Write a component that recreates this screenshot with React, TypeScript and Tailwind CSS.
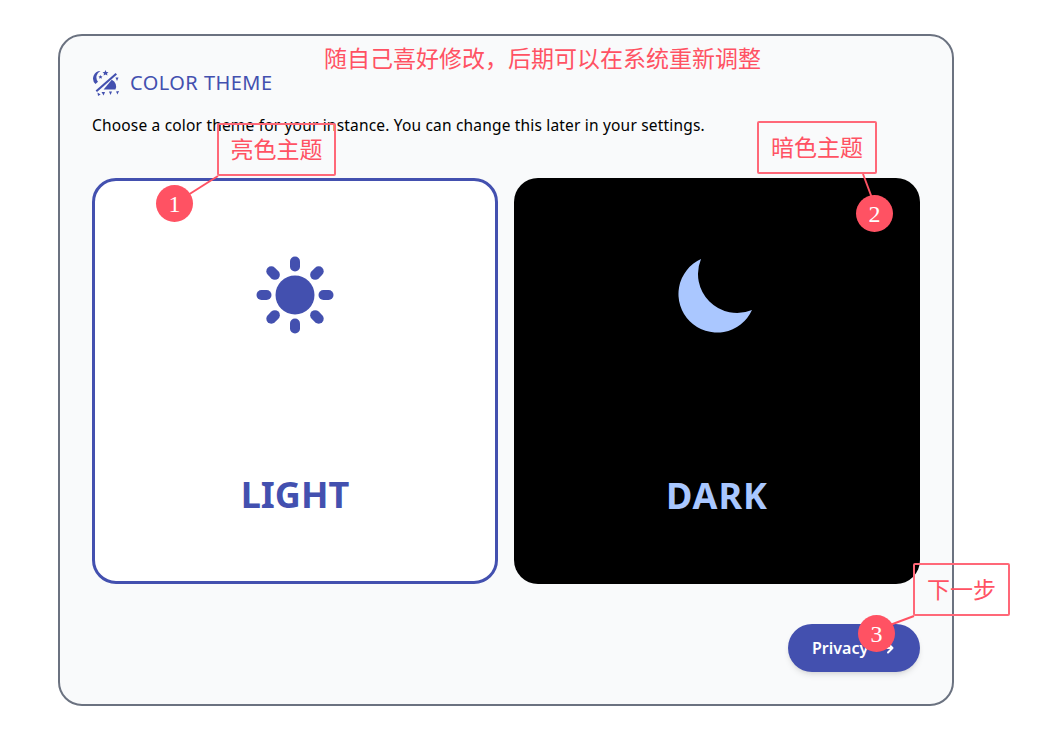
import React from "react";

const OVER = '"Noto Sans", "Lato", sans-serif';
const CJK = '"Noto Sans CJK SC", sans-serif';

function ThemeIcon() {
  return (
    <svg width="27" height="26" viewBox="0 0 27 26" fill="#4350af">
      <path d="M8.5 1 A7.5 7.5 0 0 0 3.5 14 L6 11.8 A7 7 0 0 1 8.5 1Z" />
      <path d="M13.5 0 L14.4 2 L16.5 2.2 L15 3.6 L15.4 5.6 L13.5 4.6 L11.6 5.6 L12 3.6 L10.5 2.2 L12.6 2Z" />
      <path d="M8.5 5 L9.1 6.3 L10.5 6.5 L9.5 7.4 L9.8 8.8 L8.5 8.1 L7.2 8.8 L7.5 7.4 L6.5 6.5 L7.9 6.3Z" />
      <path d="M3.6 20.4 L23.6 3 L25 4.6 L5 22Z" />
      <path d="M19.8 9.8 A7.2 7.2 0 0 1 23.4 19.6 L11.6 19.6Z" />
      <path d="M23.5 7.5 L26.5 7.5 L25 11Z" />
      <path d="M24 21.5 L27 21 L25.5 24.5 Z" />
      <path d="M17 21.5 L20 21.5 L18.5 25Z" />
      <path d="M9.5 22 L13 22 L11.6 25.5Z" />
      <path d="M5.5 22.6 L8.6 24.4 L6 26Z" />
    </svg>
  );
}

function Sun() {
  const rays = [0, 45, 90, 135, 180, 225, 270, 315];
  return (
    <svg width="78" height="78" viewBox="0 0 78 78" fill="#4350af">
      <circle cx="39" cy="39" r="19.5" />
      {rays.map((a) => (
        <rect key={a} x="34" y="0.5" width="10" height="15" rx="5" transform={`rotate(${a} 39 39)`} />
      ))}
    </svg>
  );
}

function Moon() {
  return (
    <svg width="80" height="80" viewBox="0 0 80 80" fill="#aac7ff">
      <path d="M24 2 A38.5 38.5 0 1 0 75 53 A39 39 0 0 1 24 2Z" />
    </svg>
  );
}

function Note({ className, children }: { className: string; children: React.ReactNode }) {
  return (
    <div
      className={`absolute flex items-center justify-center border-2 border-[#ff6878] rounded-[2px] pb-[2px] text-[23px] leading-none text-[#ff5263] ${className}`}
      style={{ fontFamily: CJK }}
    >
      {children}
    </div>
  );
}

function Dot({ className, children }: { className: string; children: React.ReactNode }) {
  return (
    <div
      className={`absolute flex items-center justify-center w-[37px] h-[37px] rounded-full bg-[#ff5263] text-white text-[24px] leading-none ${className}`}
      style={{ fontFamily: '"Liberation Serif", serif' }}
    >
      {children}
    </div>
  );
}

export default function App() {
  return (
    <div className="relative w-[1047px] h-[752px] bg-white overflow-hidden" style={{ fontFamily: OVER }}>
      <div className="pt-[34px] pl-[58px]">
        <div className="w-[896px] h-[672px] rounded-[24px] border-2 border-[#6b7280] bg-[#f9fafb] px-[32px] pt-[33px]">
          <div className="flex items-center gap-[11px] h-[28px]">
            <ThemeIcon />
            <h2 className="text-[20px] leading-[28px] tracking-[0.45px] text-[#4350af]">COLOR THEME</h2>
          </div>
          <p className="mt-[16px] text-[15.5px] leading-[24px] tracking-[0.18px] text-black">
            Choose a color theme for your instance. You can change this later in your settings.
          </p>
          <div className="mt-[41px] grid grid-cols-2 gap-[16px] w-[828px]">
            <div className="h-[406px] rounded-[24px] border-[3px] border-[#4350af] bg-white flex flex-col items-center pt-[75px]">
              <Sun />
              <div className="mt-[141px] text-[36px] leading-[40px] font-bold text-[#4350af]">LIGHT</div>
            </div>
            <div className="h-[406px] rounded-[24px] bg-black flex flex-col items-center pt-[79px]">
              <div>
                <Moon />
              </div>
              <div className="mt-[139px] text-[36px] leading-[40px] font-bold tracking-[1px] text-[#a9c7ff]">DARK</div>
            </div>
          </div>
          <div className="mt-[40px] flex justify-end">
            <button className="w-[132px] h-[48px] rounded-full bg-[#4350af] text-white text-[16px] font-semibold flex items-center pl-[24px] gap-[14px] shadow-md">
              Privacy
              <svg width="12" height="14" viewBox="0 0 12 14" fill="none" stroke="#fff" strokeWidth="2" strokeLinecap="round" strokeLinejoin="round">
                <path d="M1 7 H10.5 M6 2.5 L10.5 7 L6 11.5" />
              </svg>
            </button>
          </div>
        </div>
      </div>

      <svg className="absolute left-0 top-0 pointer-events-none" width="1047" height="752" fill="none" stroke="#ff5263" strokeWidth="2">
        <path d="M218 176 L188 195" />
        <path d="M863 174 L872 198" />
        <path d="M914 616 L890 625" />
      </svg>

      <div
        className="absolute left-[324px] top-[42px] text-[23px] leading-[30px] whitespace-nowrap text-[#ff5263]"
        style={{ fontFamily: CJK }}
      >
        随自己喜好修改{"\uFF0C"}后期可以在系统重新调整
      </div>

      <Note className="left-[217px] top-[123px] w-[119px] h-[53px]">亮色主题</Note>
      <Note className="left-[757px] top-[121px] w-[120px] h-[53px]">暗色主题</Note>
      <Note className="left-[913px] top-[563px] w-[97px] h-[53px]">下一步</Note>

      <Dot className="left-[156px] top-[185px]">1</Dot>
      <Dot className="left-[856px] top-[195px]">2</Dot>
      <Dot className="left-[858px] top-[615px]">3</Dot>
    </div>
  );
}
